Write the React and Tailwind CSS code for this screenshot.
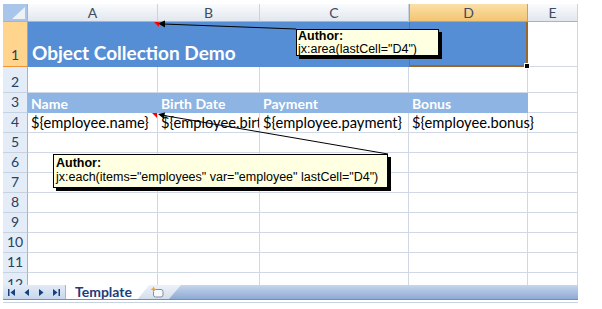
import React from 'react';

const GRID = 'border-r border-b border-[#d0d7e5]';
const CELL_FONT = { fontFamily: 'Lato, "Liberation Sans", sans-serif' };
const NOTE_FONT = { fontFamily: '"Liberation Sans", Arial, sans-serif' };

function ColHead({ label, active }) {
  return active ? (
    <div className="flex items-center justify-center border-r border-b border-r-[#f29436] border-b-[#f29436] border-l border-l-[#f29436] bg-linear-to-b from-[#fbdfa8] to-[#f3c571] text-[14px] text-[#3c4c61]">
      {label}
    </div>
  ) : (
    <div className="flex items-center justify-center border-r border-b border-r-[#c9d4e1] border-b-[#9eb6ce] bg-linear-to-b from-[#fafbfd] to-[#e2e7ee] text-[14px] text-[#3c4c61]">
      {label}
    </div>
  );
}

function RowHead({ n, active, cut }) {
  if (cut) {
    // last visible row is clipped by the tab bar
    return (
      <div className="flex items-start justify-center pt-[4px] overflow-hidden leading-none bg-[#e4ecf7] border-r border-[#9eb6ce] text-[14px] text-[#27415f]">
        {n}
      </div>
    );
  }
  return (
    <div
      className={
        active
          ? 'flex items-end justify-center pb-[4px] leading-none bg-[#ffd58d] border-r border-b border-r-[#f29436] border-b-[#f29436] text-[14px] text-[#27415f]'
          : 'flex items-end justify-center pb-[3px] leading-none bg-[#e4ecf7] border-r border-b border-r-[#9eb6ce] border-b-[#c5d2e2] text-[14px] text-[#27415f]'
      }
    >
      {n}
    </div>
  );
}

function Marker() {
  // red comment indicator in the top-right corner of a cell
  return <div className="absolute right-0 top-0 w-0 h-0 border-l-[5px] border-l-transparent border-t-[5px] border-t-[#ff0000]" />;
}

function Empty({ last }) {
  return [0, 1, 2, 3, 4].map((i) => <div key={i} className={last ? 'border-r border-[#d0d7e5]' : GRID} />);
}

export default function App() {
  return (
    <div className="relative w-[602px] h-[309px] bg-white overflow-hidden pl-[3px] pt-[4px]" style={CELL_FONT}>
      <div className="grid w-[575px] grid-cols-[25px_130px_102px_149px_119px_50px] grid-rows-[18px_45px_26px_20px_20px_20px_20px_20px_20px_20px_20px_20px_12px]">
        {/* corner */}
        <div className="relative bg-[#aac5ea] border-r border-b border-[#9eb6ce]">
          <div className="absolute right-[2px] bottom-[2px] w-0 h-0 border-l-[13px] border-l-transparent border-b-[12px] border-b-[#eef2f7]" />
        </div>
        <ColHead label="A" />
        <ColHead label="B" />
        <ColHead label="C" />
        <ColHead label="D" active />
        <ColHead label="E" />

        {/* row 1 */}
        <RowHead n="1" active />
        <div className="relative col-span-3 flex items-end bg-[#558ed5] pl-[4px] pb-[5px] leading-none text-[19px] font-bold text-white">
          Object Collection Demo
          <div className="absolute left-[126px] top-0 w-0 h-0 border-l-[5px] border-l-transparent border-t-[5px] border-t-[#ff0000]" />
        </div>
        <div className="relative bg-[#558ed5] border-r-2 border-b-2 border-l border-[#9a682c]">
          <div className="absolute -right-[4px] -bottom-[4px] w-[6px] h-[6px] bg-black border border-white" />
        </div>
        <div className={GRID} />

        {/* row 2 */}
        <RowHead n="2" />
        <Empty />

        {/* row 3 */}
        <RowHead n="3" />
        {['Name', 'Birth Date', 'Payment', 'Bonus'].map((h) => (
          <div key={h} className="flex items-center bg-[#8db4e2] pl-[3px] text-[14px] font-bold text-white">
            {h}
          </div>
        ))}
        <div className={GRID} />

        {/* row 4 */}
        <RowHead n="4" />
        <div className={`relative flex items-center pl-[3px] text-[14.7px] text-black whitespace-nowrap ${GRID}`}>
          {'${employee.name}'}
          <Marker />
        </div>
        <div className={`flex items-center pl-[3px] text-[14.7px] text-black whitespace-nowrap overflow-hidden ${GRID}`}>
          {'${employee.birthDate}'}
        </div>
        <div className={`flex items-center pl-[3px] text-[14.7px] text-black whitespace-nowrap ${GRID}`}>
          {'${employee.payment}'}
        </div>
        <div className={`flex items-center pl-[3px] text-[14.7px] text-black whitespace-nowrap ${GRID}`}>
          {'${employee.bonus}'}
        </div>
        <div className={GRID} />

        {['5', '6', '7', '8', '9', '10', '11'].map((n) => (
          <React.Fragment key={n}>
            <RowHead n={n} />
            <Empty />
          </React.Fragment>
        ))}
        <RowHead n="12" cut />
        <Empty last />
      </div>

      {/* sheet tab bar */}
      <div className="flex w-[575px] h-[15px] bg-linear-to-b from-[#c6d6ec] to-[#8eaad4] border-b border-[#6f8fbd]">
        <div className="flex items-center gap-[8px] w-[63px] pl-[5px] bg-linear-to-b from-[#e2eaf6] to-[#c8d7ec] border-r border-[#9eb6ce]">
          <svg width="8" height="7" viewBox="0 0 8 7"><rect x="0" y="0" width="1.5" height="7" fill="#17407f" /><path d="M7 0 L2.5 3.5 L7 7 Z" fill="#17407f" /></svg>
          <svg width="6" height="7" viewBox="0 0 6 7"><path d="M5 0 L0.5 3.5 L5 7 Z" fill="#17407f" /></svg>
          <svg width="6" height="7" viewBox="0 0 6 7"><path d="M1 0 L5.5 3.5 L1 7 Z" fill="#17407f" /></svg>
          <svg width="8" height="7" viewBox="0 0 8 7"><path d="M1 0 L5.5 3.5 L1 7 Z" fill="#17407f" /><rect x="6.5" y="0" width="1.5" height="7" fill="#17407f" /></svg>
        </div>
        <div className="relative w-[84px] h-[14px] -mr-[12px] bg-white [clip-path:polygon(0_0,100%_0,86%_100%,0_100%)]">
          <span className="absolute left-[9px] top-[-1px] text-[14px] leading-[15px] font-bold text-[#1c3c7c]">Template</span>
        </div>
        <div className="flex items-center justify-center pr-[6px] w-[43px] h-[14px] bg-linear-to-b from-[#eef2f8] to-[#d3deec] [clip-path:polygon(26%_0,100%_0,72%_100%,0_100%)]">
          <svg width="14" height="12" viewBox="0 0 14 12">
            <rect x="3.5" y="3.5" width="9.5" height="7.5" rx="2" fill="#f7f8fa" stroke="#7f8ea3" strokeWidth="1" />
            <path d="M3.5 0.3 L4.4 2.5 L6.7 3.3 L4.4 4.1 L3.5 6.3 L2.6 4.1 L0.3 3.3 L2.6 2.5 Z" fill="#f3a01f" />
          </svg>
        </div>
      </div>
      <div className="w-[575px] h-[1px] mt-[2px] bg-[#c9d3e0]" />

      {/* comment leader lines */}
      <svg className="absolute left-0 top-0 pointer-events-none" width="602" height="309">
        <line x1="296" y1="29" x2="163" y2="24" stroke="#000" strokeWidth="1" />
        <polygon points="158,23.5 165,20.5 165,27.5" fill="#000" />
        <line x1="388" y1="154" x2="164" y2="115.5" stroke="#000" strokeWidth="1" />
        <polygon points="158,114 165,112.5 164,119" fill="#000" />
      </svg>

      {/* comment boxes */}
      <div
        className="absolute left-[296px] top-[29px] w-[143px] h-[27px] bg-[#ffffe1] border border-black shadow-[3px_3px_0_#000] pl-[1px] text-[12.5px] leading-[13px] text-black"
        style={NOTE_FONT}
      >
        <div className="font-bold">Author:</div>
        <div>jx:area(lastCell="D4")</div>
      </div>
      <div
        className="absolute left-[53px] top-[154px] w-[335px] h-[34px] bg-[#ffffe1] border border-black shadow-[3px_3px_0_#000] pl-[2px] pt-[1px] text-[12.5px] leading-[14px] text-black"
        style={NOTE_FONT}
      >
        <div className="font-bold">Author:</div>
        <div>jx:each(items="employees" var="employee" lastCell="D4")</div>
      </div>
    </div>
  );
}
